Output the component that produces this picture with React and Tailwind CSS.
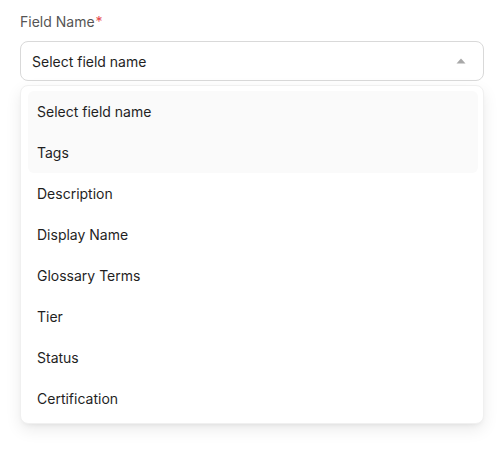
import React from "react";

const options = [
  "Select field name",
  "Tags",
  "Description",
  "Display Name",
  "Glossary Terms",
  "Tier",
  "Status",
  "Certification",
];

export default function App() {
  return (
    <div className="min-h-[451px] bg-white pl-5 pr-[17px] pt-[11px] text-[14px] font-['Inter',sans-serif]">
      <label className="flex items-center h-[20px] text-[#555] mb-[10px]">
        Field Name<span className="text-[#e5484d] ml-[1px]">*</span>
      </label>

      <div className="flex items-center justify-between h-[40px] rounded-lg border border-[#d9d9d9] pl-[11px] pr-[17px] text-[#1f1f1f]">
        <span>Select field name</span>
        <svg width="10" height="6" viewBox="0 0 10 6" className="text-[#a8a8a8]">
          <path d="M5 0.5 L9.5 5.5 H0.5 Z" fill="currentColor" />
        </svg>
      </div>

      <div className="mt-[4px] rounded-lg border border-[#f0f0f0] bg-white pl-[7px] pr-[5px] pt-[5px] pb-[4px] shadow-[0_6px_16px_rgba(0,0,0,0.08),0_3px_6px_-4px_rgba(0,0,0,0.12)]">
        <div className="rounded-md bg-[#fafafa]">
          {options.slice(0, 2).map((opt) => (
            <div key={opt} className="flex items-center h-[41px] px-[9px] text-[#1f1f1f]">
              {opt}
            </div>
          ))}
        </div>
        {options.slice(2).map((opt) => (
          <div key={opt} className="flex items-center h-[41px] px-[9px] text-[#1f1f1f]">
            {opt}
          </div>
        ))}
      </div>
    </div>
  );
}
